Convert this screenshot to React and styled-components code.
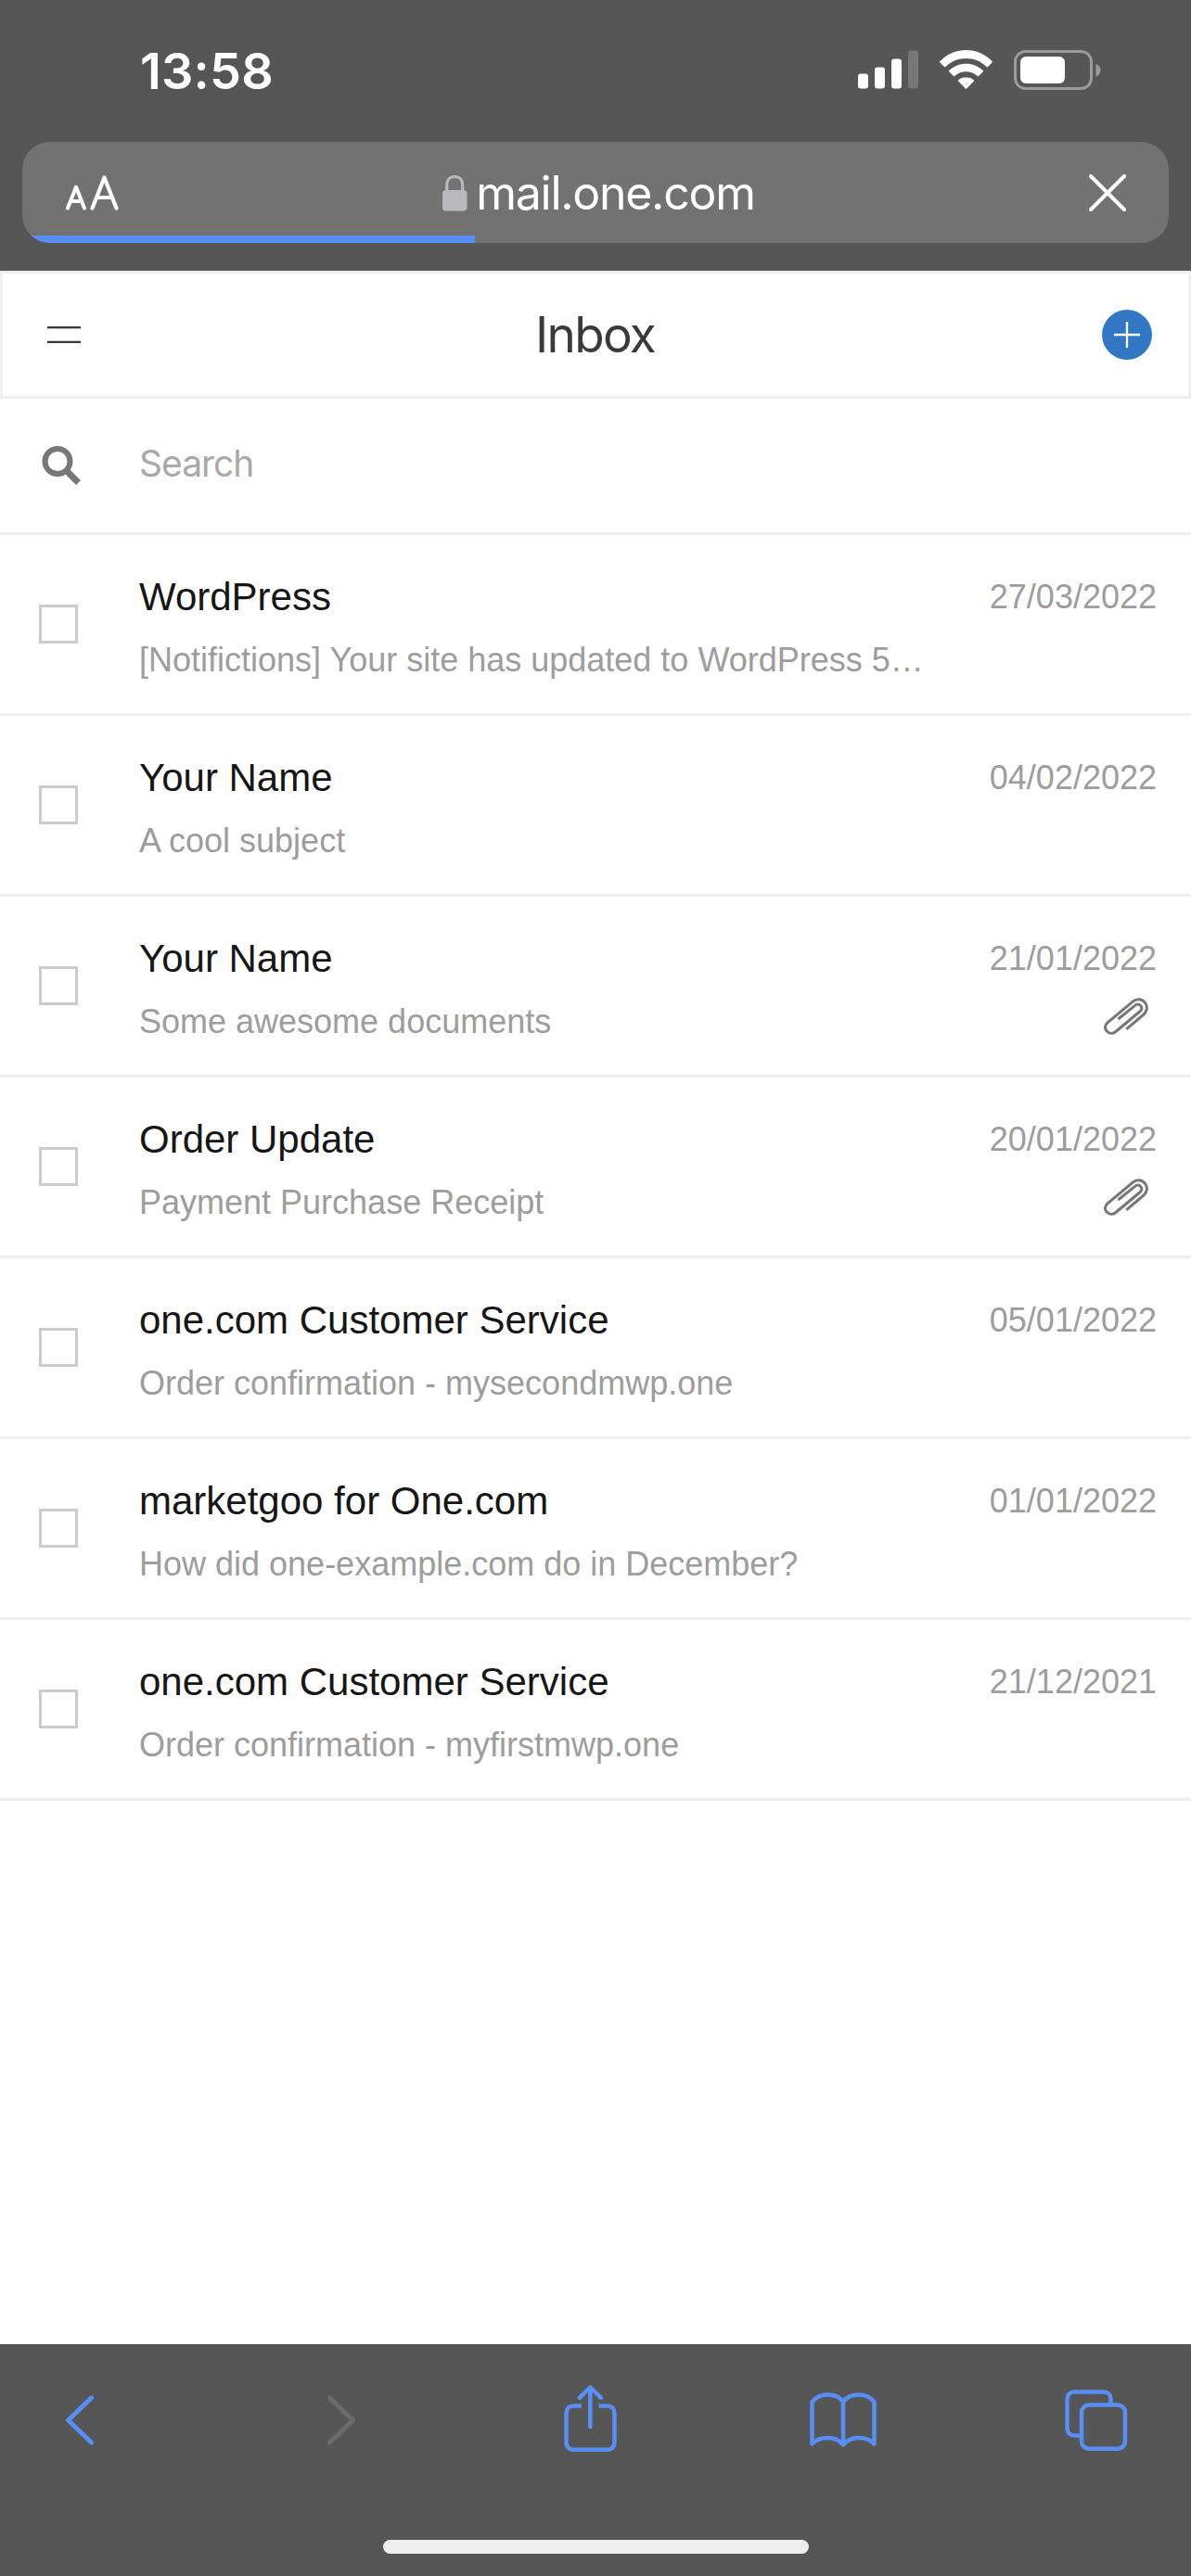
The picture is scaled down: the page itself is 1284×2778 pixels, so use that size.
import React from "react";
import styled, { createGlobalStyle } from "styled-components";

const mails = [
  { id: 1, sender: "WordPress", subject: "[Notifictions] Your site has updated to WordPress 5…", date: "27/03/2022" },
  { id: 2, sender: "Your Name", subject: "A cool subject", date: "04/02/2022" },
  { id: 3, sender: "Your Name", subject: "Some awesome documents", date: "21/01/2022", attachment: true },
  { id: 4, sender: "Order Update", subject: "Payment Purchase Receipt", date: "20/01/2022", attachment: true },
  { id: 5, sender: "one.com Customer Service", subject: "Order confirmation - mysecondmwp.one", date: "05/01/2022" },
  { id: 6, sender: "marketgoo for One.com", subject: "How did one-example.com do in December?", date: "01/01/2022" },
  { id: 7, sender: "one.com Customer Service", subject: "Order confirmation - myfirstmwp.one", date: "21/12/2021" },
];

const SignalIcon = () => (
  <svg width="66" height="42" viewBox="0 0 66 42" fill="#fff">
    <rect x="0" y="25.500" width="11" height="16" rx="3" />
    <rect x="18" y="18.500" width="11" height="23" rx="3" />
    <rect x="36" y="9.500" width="11" height="32" rx="3" />
    <rect x="54" y="0.500" width="11" height="41" rx="3" fill="#777" />
  </svg>
);

const WifiIcon = () => (
  <svg width="58" height="42" viewBox="0 0 58 42" fill="#fff">
    <path d="M28.500 0C17.500 0 7.500 4.500 0.500 12a1 1 0 0 0 0 1.400l4.500 4.600a1 1 0 0 0 1.400 0C12.200 12.200 20 9 28.500 9s16.300 3.200 22.100 9a1 1 0 0 0 1.400 0l4.500-4.600a1 1 0 0 0 0-1.400C49.500 4.500 39.500 0 28.500 0z" />
    <path d="M28.500 14.700c-7 0-13.400 2.700-18.200 7.200a1 1 0 0 0 0 1.500l4.600 4.700a1 1 0 0 0 1.400 0c3.200-3 7.500-4.800 12.200-4.800s9 1.800 12.200 4.800a1 1 0 0 0 1.400 0l4.600-4.700a1 1 0 0 0 0-1.500C41.900 17.400 35.500 14.700 28.500 14.700z" />
    <path d="M28.500 29.200c-3.200 0-6 1.100-8.200 3a1 1 0 0 0 0 1.500l7.500 7.700a1 1 0 0 0 1.400 0l7.500-7.700a1 1 0 0 0 0-1.500c-2.200-1.900-5-3-8.200-3z" />
  </svg>
);

const BatteryIcon = () => (
  <svg width="95" height="44" viewBox="0 0 95 44">
    <rect x="1.500" y="1.500" width="82" height="40" rx="11" fill="none" stroke="#9b9b9b" strokeWidth="3" />
    <rect x="7" y="7" width="48" height="29" rx="6" fill="#fff" />
    <path d="M88.500 15c3.300 1.300 5 3.700 5 6.500S91.800 27 88.500 28.500z" fill="#9b9b9b" />
  </svg>
);

const TextSizeIcon = () => (
  <svg width="58" height="38" viewBox="0 0 58 38" fill="none" stroke="#fff" strokeLinecap="round" strokeLinejoin="round">
    <path d="M2 35.500 11 12.800 20 35.500M5.500 28h11" strokeWidth="4" />
    <path d="M28.500 35.500 41.500 2.500 54.500 35.500M33 24h17" strokeWidth="4.200" />
  </svg>
);

const LockIcon = () => (
  <svg width="27" height="39" viewBox="0 0 27 39">
    <rect x="0" y="16" width="26.500" height="22.500" rx="4" fill="#bab9bf" />
    <path d="M4.700 18v-7.500c0-5.500 3.400-9 8.500-9s8.500 3.500 8.500 9V18" fill="none" stroke="#bab9bf" strokeWidth="3.200" />
  </svg>
);

const CloseIcon = () => (
  <svg width="40" height="40" viewBox="0 0 40 40" fill="none" stroke="#fff" strokeWidth="4" strokeLinecap="round">
    <path d="M2 2 38 38M38 2 2 38" />
  </svg>
);

const MenuIcon = () => (
  <svg width="36" height="18" viewBox="0 0 36 18" fill="#3a3a3c">
    <rect x="0" y="0" width="36" height="2.300" />
    <rect x="0" y="15.700" width="36" height="2.300" />
  </svg>
);

const PlusIcon = () => (
  <svg width="28" height="28" viewBox="0 0 28 28" stroke="#fff" strokeWidth="2.300">
    <path d="M14 0v28M0 14h28" />
  </svg>
);

const SearchIcon = () => (
  <svg width="43" height="43" viewBox="0 0 43 43" fill="none" stroke="#777" strokeWidth="6">
    <circle cx="17" cy="16.500" r="13.500" />
    <path d="M26.500 26.500 39.500 39.500" strokeWidth="7" />
  </svg>
);

const ClipIcon = () => (
  <svg width="48" height="40" viewBox="0 0 48 40" fill="none" stroke="#777" strokeWidth="3">
    <path d="M24.300 33.800 43 18C47 14.500 47.600 9 44.200 4.900 40.700 0.900 35.300 0.700 31.500 3.900L4 26.800C0.900 29.600 0.700 33.300 3.200 36c2.600 2.900 6.600 3.100 9.700 0.500L38.600 15c2.500-2.100 2.800-4.400 1.200-6.400-1.700-2-4.200-2-6.500 0L15.500 23" />
  </svg>
);

const BackIcon = () => (
  <svg width="32" height="54" viewBox="0 0 32 54" fill="none" stroke="currentColor" strokeWidth="5" strokeLinecap="round" strokeLinejoin="round">
    <path d="M28.500 3 3.500 27l25 24" />
  </svg>
);

const ForwardIcon = () => (
  <svg width="32" height="54" viewBox="0 0 32 54" fill="none" stroke="currentColor" strokeWidth="5" strokeLinecap="round" strokeLinejoin="round">
    <path d="M3.500 3 28.500 27 3.500 51" />
  </svg>
);

const ShareIcon = () => (
  <svg width="57" height="72" viewBox="0 0 57 72" fill="none" stroke="currentColor" strokeWidth="4.500">
    <path d="M19 22.500h-8.500c-5 0-8 3-8 8v31.300c0 5 3 8 8 8h36c5 0 8-3 8-8V30.500c0-5-3-8-8-8H37.500" />
    <path d="M28.300 45V3M16.800 13.800 28.300 2.500l11.500 11.300" strokeLinecap="round" strokeLinejoin="round" />
  </svg>
);

const BookIcon = () => (
  <svg width="72" height="60" viewBox="0 0 72 60" fill="none" stroke="currentColor" strokeWidth="4.500" strokeLinecap="round" strokeLinejoin="round">
    <path d="M36 56.500V10C32.500 5.200 26.500 2.500 19.500 2.500S6 5.500 2.500 10.500v45c4.200-4.600 10-6.500 17-6.500S32 51.700 36 56.500c4-4.800 9.500-7.500 16.500-7.500s12.800 1.900 17 6.500v-45C66 5.500 60 2.500 52.500 2.500S39.500 5.200 36 10" />
  </svg>
);

const TabsIcon = () => (
  <svg width="68" height="66" viewBox="0 0 68 66" fill="none" stroke="currentColor" strokeWidth="4.500">
    <rect x="18" y="16.500" width="47" height="47.300" rx="8" />
    <path d="M18 49.500h-7.500c-5 0-8-3-8-8v-31c0-5 3-8 8-8h31c5 0 8 3 8 8v6" />
  </svg>
);

const MailRow = ({ mail }) => {
  return (
    <Row>
      <Checkbox />
      <Message>
        <Sender>{mail.sender}</Sender>
        <Subject>{mail.subject}</Subject>
      </Message>
      <Meta>
        <DateText>{mail.date}</DateText>
        {mail.attachment && <ClipIcon />}
      </Meta>
    </Row>
  );
};

const App = () => {
  return (
    <>
      <GlobalStyle />
      <Phone>
        <StatusBar>
          <Clock>13:58</Clock>
          <StatusIcons>
            <SignalIcon />
            <WifiIcon />
            <BatteryIcon />
          </StatusIcons>
        </StatusBar>
        <AddressArea>
          <AddressBar>
            <AddressContent>
              <TextSizeIcon />
              <Domain>
                <LockIcon />
                <span>mail.one.com</span>
              </Domain>
              <CloseIcon />
            </AddressContent>
            <Progress />
          </AddressBar>
        </AddressArea>
        <Header>
          <MenuIcon />
          <Title>Inbox</Title>
          <ComposeButton>
            <PlusIcon />
          </ComposeButton>
        </Header>
        <SearchRow>
          <SearchIcon />
          <SearchText>Search</SearchText>
        </SearchRow>
        <MailList>
          {mails.map((mail) => (
            <MailRow key={mail.id} mail={mail} />
          ))}
        </MailList>
        <BottomBar>
          <Toolbar>
            <ToolButton>
              <BackIcon />
            </ToolButton>
            <ToolButton $gap={250} $disabled>
              <ForwardIcon />
            </ToolButton>
            <ToolButton $gap={224} $raise={5}>
              <ShareIcon />
            </ToolButton>
            <ToolButton $gap={208}>
              <BookIcon />
            </ToolButton>
            <ToolButton $gap={203}>
              <TabsIcon />
            </ToolButton>
          </Toolbar>
          <HomeIndicator />
        </BottomBar>
      </Phone>
    </>
  );
};

export default App;

const GlobalStyle = createGlobalStyle`
  * {
    box-sizing: border-box;
  }
  body {
    margin: 0;
    background-color: #fff;
    font-family: "Liberation Sans", Arial, sans-serif;
  }
  svg {
    display: block;
    flex-shrink: 0;
  }
`;

const Phone = styled.div`
  display: flex;
  flex-direction: column;
  width: 1284px;
  height: 2778px;
  overflow: hidden;
`;

const StatusBar = styled.div`
  display: flex;
  justify-content: space-between;
  height: 153px;
  padding: 54px 96px 0 151px;
  background-color: #565656;
`;

const Clock = styled.div`
  font-family: Inter, sans-serif;
  font-size: 54px;
  font-weight: 600;
  line-height: 46px;
  letter-spacing: 0.2px;
  color: #fff;
`;

const StatusIcons = styled.div`
  display: flex;
  gap: 22px;
`;

const AddressArea = styled.div`
  height: 139px;
  padding: 0 24px;
  background-color: #565656;
`;

const AddressBar = styled.div`
  display: flex;
  flex-direction: column;
  height: 109px;
  border-radius: 30px;
  background-color: #727272;
  overflow: hidden;
`;

const AddressContent = styled.div`
  display: flex;
  justify-content: space-between;
  align-items: center;
  height: 101px;
  padding: 9px 46px 0 47px;
`;

const Domain = styled.div`
  display: flex;
  align-items: center;
  gap: 9px;
  margin-right: 12px;
  font-family: Inter, sans-serif;
  font-size: 50px;
  line-height: 50px;
  letter-spacing: -1.3px;
  color: #fff;
`;

const Progress = styled.div`
  width: 488px;
  height: 8px;
  background-color: #588ff4;
`;

const Header = styled.div`
  display: flex;
  justify-content: space-between;
  align-items: center;
  height: 138px;
  padding: 0 39px 0 48px;
  border: 3px solid #efefef;
`;

const Title = styled.div`
  margin-left: 8px;
  font-family: Inter, sans-serif;
  font-size: 53px;
  line-height: 60px;
  letter-spacing: -1.7px;
  color: #3a3a3c;
`;

const ComposeButton = styled.div`
  display: flex;
  justify-content: center;
  align-items: center;
  width: 54px;
  height: 54px;
  border-radius: 50%;
  background-color: #3177c4;
`;

const SearchRow = styled.div`
  display: flex;
  align-items: center;
  gap: 62px;
  height: 147px;
  padding-left: 45px;
  border-bottom: 3px solid #efefef;
`;

const SearchText = styled.div`
  padding-bottom: 4px;
  font-family: Inter, sans-serif;
  font-size: 39px;
  line-height: 44px;
  letter-spacing: -1px;
  color: #a9a9a9;
`;

const MailList = styled.div`
  flex: 1;
`;

const Row = styled.div`
  display: flex;
  height: 195px;
  padding: 0 37px 0 42px;
  border-bottom: 3px solid #efefef;
`;

const Checkbox = styled.div`
  flex-shrink: 0;
  width: 42px;
  height: 42px;
  margin-top: 75px;
  border: 3px solid #ccc;
`;

const Message = styled.div`
  width: 850px;
  margin-left: 66px;
  padding-top: 43px;
`;

const Sender = styled.div`
  font-size: 42px;
  line-height: 48px;
  color: #161616;
`;

const Subject = styled.div`
  margin-top: 23px;
  font-size: 36px;
  line-height: 42px;
  color: #9d9d9c;
  white-space: nowrap;
`;

const Meta = styled.div`
  display: flex;
  flex: 1;
  flex-direction: column;
  align-items: flex-end;
  padding-top: 46px;
  > svg {
    margin: 21px 9px 0 0;
  }
`;

const DateText = styled.div`
  font-size: 36px;
  line-height: 42px;
  color: #9d9d9c;
`;

const BottomBar = styled.div`
  display: flex;
  flex-direction: column;
  align-items: center;
  height: 250px;
  background-color: #565656;
`;

const Toolbar = styled.div`
  display: flex;
  align-items: center;
  width: 100%;
  height: 211px;
  padding: 0 0 47px 70px;
`;

const ToolButton = styled.div`
  margin-left: ${({ $gap }) => $gap || 0}px;
  padding-bottom: ${({ $raise }) => $raise || 0}px;
  color: ${({ $disabled }) => ($disabled ? "#6b6b6b" : "#588ff4")};
`;

const HomeIndicator = styled.div`
  width: 459px;
  height: 15px;
  border-radius: 8px;
  background-color: #eeeeee;
`;
